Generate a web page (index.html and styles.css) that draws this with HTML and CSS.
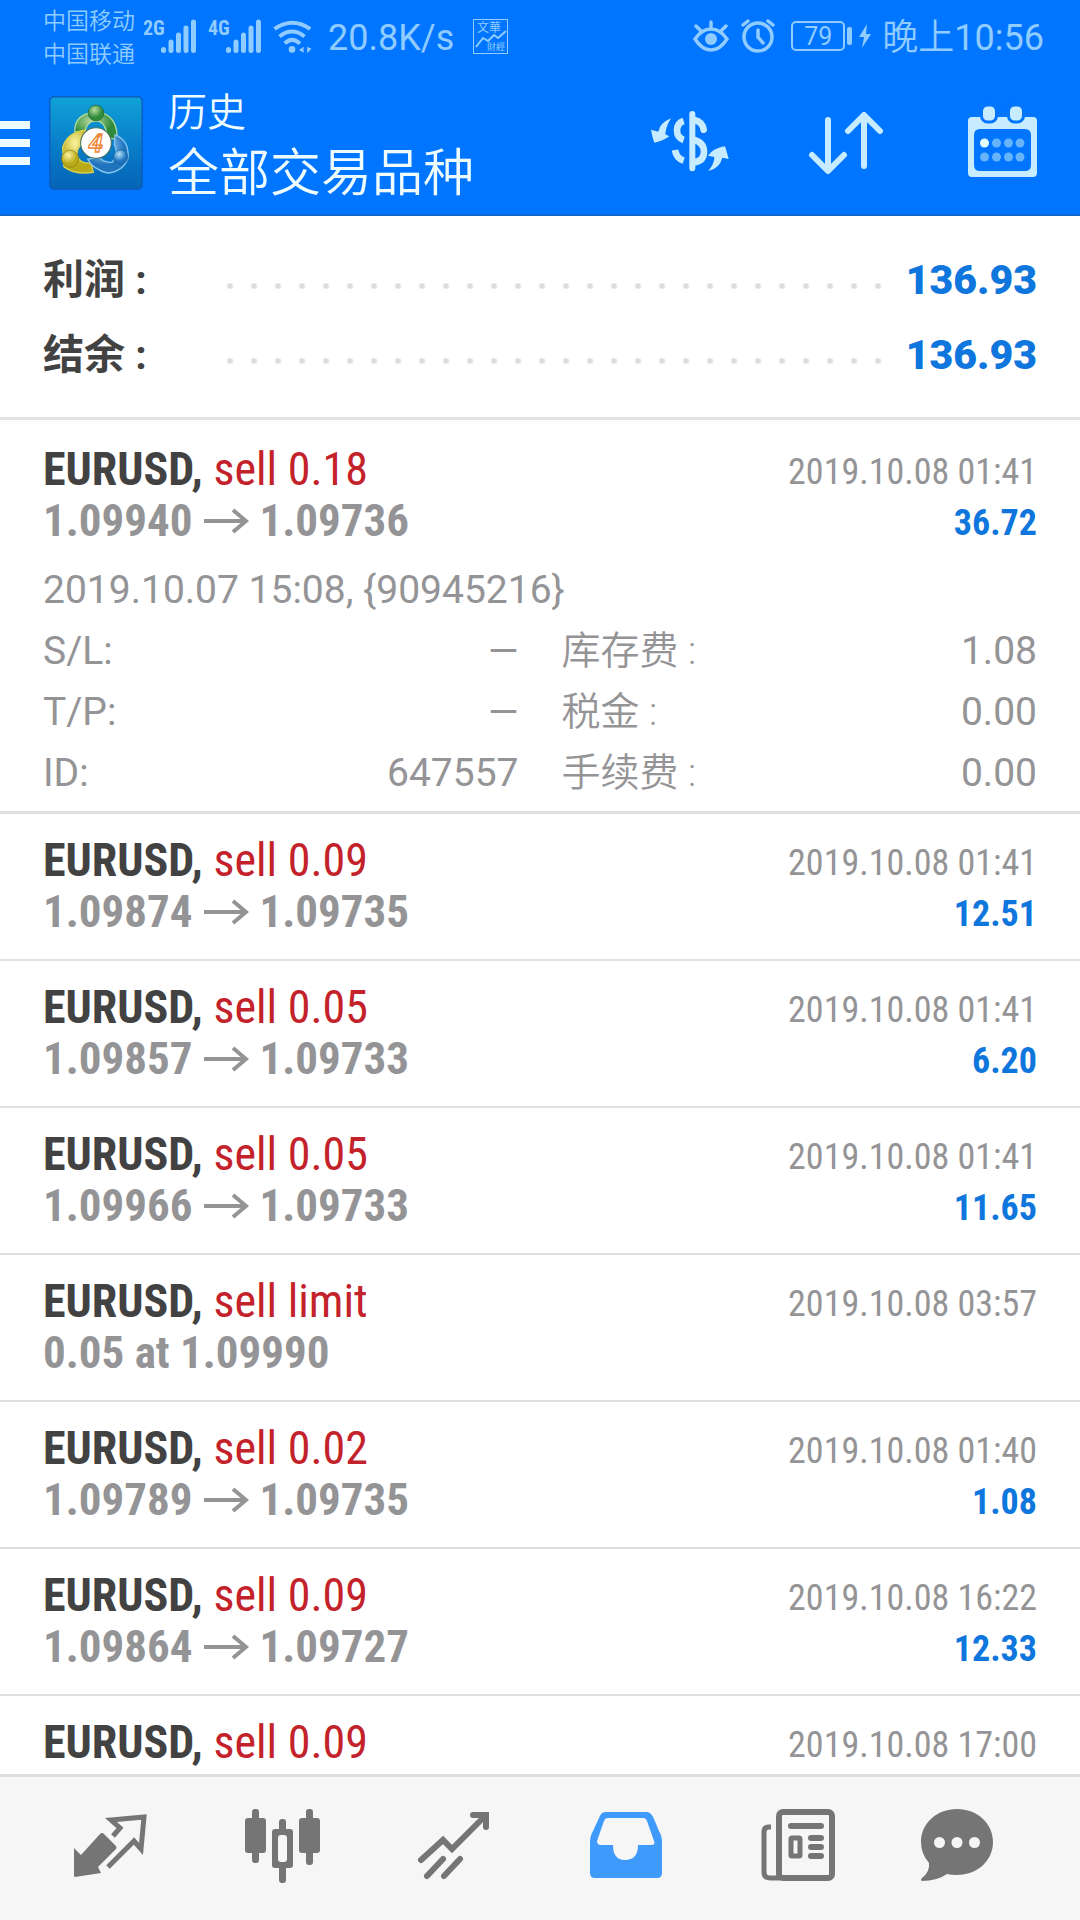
FILE: index.html
```html
<!DOCTYPE html>
<html lang="zh-CN">
<head>
<meta charset="utf-8">
<meta name="viewport" content="width=device-width, initial-scale=1">
<title>历史</title>
<link rel="stylesheet" href="styles.css">
</head>
<body>
<svg class="defs" aria-hidden="true">
  <symbol id="arrow" viewBox="0 0 45 26"><path d="M0 13H42M29 2L42 13L29 24" fill="none" stroke="currentColor" stroke-width="4"/></symbol>
  <symbol id="signal" viewBox="0 0 35 34"><path d="M2.500 30.500V31.500M10 23V31.500M17.500 16V31.500M25 9V31.500M32.500 3V31.500" fill="none" stroke="currentColor" stroke-width="5" stroke-linecap="round"/></symbol>
</svg>

<header class="top">
  <div class="status">
    <div class="carriers"><span>中国移动</span><span>中国联通</span></div>
    <div class="cell"><span class="gen">2G</span><svg class="signal"><use href="#signal"/></svg></div>
    <div class="cell"><span class="gen">4G</span><svg class="signal"><use href="#signal"/></svg></div>
    <svg class="wifi" viewBox="396 22 120 106" fill="none" stroke="currentColor" stroke-width="12">
      <path d="M400 52Q453 15 508 52M415 75Q453 45 491 75M431 96Q453 74 477 96"/>
      <circle cx="453" cy="114" r="10" fill="currentColor" stroke="none"/>
      <path d="M474 116L488 106V124ZM499 106V126L512 112Z" fill="currentColor" stroke="none"/>
    </svg>
    <span class="speed">20.8K/s</span>
    <svg class="app-note" viewBox="0 0 35 35">
      <rect x=".5" y=".5" width="34" height="34" fill="none" stroke="currentColor"/>
      <text x="4" y="13" class="note-big">文華</text>
      <text x="14" y="31" class="note-small">財經</text>
      <path d="M3 28L10 19L15 22L21 16L25 19L33 12" fill="none" stroke="currentColor" stroke-width="2"/>
    </svg>
    <svg class="eye" viewBox="0 0 36 32" fill="none" stroke="currentColor" stroke-width="3.500" stroke-linecap="round">
      <path d="M2 19Q9 9 18 9T34 19Q27 30 18 30T2 19ZM18 2V8M3 6L8 11M33 6L28 11"/>
      <circle cx="18" cy="19" r="6" fill="currentColor" stroke="none"/>
    </svg>
    <svg class="alarm" viewBox="0 0 34 34" fill="none" stroke="currentColor" stroke-width="3.500" stroke-linecap="round">
      <circle cx="17" cy="18" r="14"/><path d="M17 11V18L22 24M2 6L7 2M32 6L27 2"/>
    </svg>
    <div class="battery"><span class="level">79</span><span class="nub"></span></div>
    <svg class="bolt" viewBox="0 0 12 24"><path d="M8 0L0 13H5L3 24L12 10H7Z" fill="currentColor"/></svg>
    <span class="clock"><span class="han">晚上</span>10:56</span>
  </div>

  <div class="appbar">
    <button class="menu" aria-label="菜单"><i></i><i></i><i></i></button>
    <svg class="logo" viewBox="30 32 276 276" aria-label="MetaTrader 4">
      <defs>
        <linearGradient id="lb" x1="0" y1="0" x2="0" y2="1"><stop offset="0" stop-color="#11a2d8"/><stop offset=".5" stop-color="#087fca"/><stop offset="1" stop-color="#0563b4"/></linearGradient>
        <radialGradient id="lg" cx=".4" cy=".3"><stop offset="0" stop-color="#b9dca0"/><stop offset="1" stop-color="#2f8a3a"/></radialGradient>
        <radialGradient id="ly" cx=".4" cy=".3"><stop offset="0" stop-color="#fbf3a0"/><stop offset="1" stop-color="#b9aa18"/></radialGradient>
        <radialGradient id="ll" cx=".4" cy=".3"><stop offset="0" stop-color="#b5e2f8"/><stop offset="1" stop-color="#1f74bd"/></radialGradient>
      </defs>
      <rect x="32" y="34" width="272" height="272" rx="14" fill="url(#lb)" stroke="#0b5fc0" stroke-width="5"/>
      <path d="M106 138Q104 92 150 82H188Q232 98 230 160L200 154Q200 116 176 106H160Q140 112 136 136Z" fill="url(#lg)" stroke="#a9d89a" stroke-width="4"/>
      <path d="M136 132Q84 138 70 182L74 240Q106 264 160 256L154 230Q116 230 112 204Q112 180 134 170Z" fill="url(#ly)" stroke="#d8d24c" stroke-width="4"/>
      <path d="M224 146Q266 162 262 214Q248 254 202 258Q160 248 144 218L176 212Q196 230 216 226Q236 202 222 174Z" fill="url(#ll)" stroke="#86c5ee" stroke-width="4"/>
      <circle cx="168" cy="82" r="23" fill="url(#lg)" stroke="#17632f" stroke-width="2"/>
      <circle cx="92" cy="216" r="25" fill="url(#ly)" stroke="#857b15" stroke-width="2"/>
      <circle cx="240" cy="211" r="21" fill="url(#ll)" stroke="#155a99" stroke-width="2"/>
      <circle cx="168" cy="170" r="45" fill="#fff" stroke="#47705a" stroke-width="3"/>
      <text x="167" y="197" class="four">4</text>
    </svg>
    <div class="heading"><p class="kicker">历史</p><h1>全部交易品种</h1></div>
    <div class="actions">
      <button aria-label="货币"><svg viewBox="31 12 240 240" fill="none" stroke="currentColor" stroke-width="20">
        <path d="M158 45V208" stroke-width="18" stroke-linecap="round"/>
        <path d="M132 66Q112 72 112 94T132 123M106 153Q110 178 132 185"/>
        <path d="M164 63Q188 68 192 92" stroke-linecap="round"/><path d="M162 122Q193 130 193 158T162 190"/>
        <path d="M94 58Q60 72 56 98L34 92Q38 115 44 131Q66 128 89 112L77 106Q78 84 94 58ZM206 216Q225 192 224 174L205 170Q220 148 256 142Q262 160 267 180L248 176Q240 208 206 216Z" fill="currentColor" stroke="none"/>
      </svg></button>
      <button aria-label="排序"><svg viewBox="0 0 80 80" fill="none" stroke="currentColor" stroke-width="6" stroke-linecap="round" stroke-linejoin="round"><path d="M22 17V67M6 52L22 68L38 52M58 63V13M42 28L58 12L74 28"/></svg></button>
      <button aria-label="日期"><svg viewBox="0 0 80 80">
        <path fill-rule="evenodd" fill="currentColor" d="M10 14H71Q75 14 75 18V70Q75 74 71 74H10Q6 74 6 70V18Q6 14 10 14ZM18 26Q12 26 12 32V62Q12 68 18 68H63Q69 68 69 62V32Q69 26 63 26Z"/>
        <g fill="currentColor" stroke="#0075ff" stroke-width="3"><rect x="19.500" y="2" width="15" height="17" rx="6"/><rect x="46.500" y="2" width="15" height="17" rx="6"/></g>
        <circle cx="22.500" cy="40" r="4.500" fill="#e4fffb"/>
        <g fill="#66b5fb"><circle cx="34.500" cy="40" r="4.500"/><circle cx="46.500" cy="40" r="4.500"/><circle cx="58" cy="40" r="4.500"/><circle cx="22.500" cy="54" r="4.500"/><circle cx="34.500" cy="54" r="4.500"/><circle cx="46.500" cy="54" r="4.500"/><circle cx="58" cy="54" r="4.500"/></g>
      </svg></button>
    </div>
  </div>
</header>

<main class="content">
  <section class="summary">
    <div class="total"><span class="name">利润 :</span><span class="dots"></span><b>136.93</b></div>
    <div class="total"><span class="name">结余 :</span><span class="dots"></span><b>136.93</b></div>
  </section>

  <article class="deal open">
    <div class="line">
      <div><h2>EURUSD, <em>sell 0.18</em></h2><p class="price">1.09940<svg class="arrow"><use href="#arrow"/></svg>1.09736</p></div>
      <div class="side"><time>2019.10.08 01:41</time><b>36.72</b></div>
    </div>
    <p class="comment">2019.10.07 15:08, {90945216}</p>
    <div class="details">
      <div class="pair"><span>S/L:</span><span>—</span></div><div class="pair"><span class="han">库存费 :</span><span>1.08</span></div>
      <div class="pair"><span>T/P:</span><span>—</span></div><div class="pair"><span class="han">税金 :</span><span>0.00</span></div>
      <div class="pair"><span>ID:</span><span>647557</span></div><div class="pair"><span class="han">手续费 :</span><span>0.00</span></div>
    </div>
  </article>
  <article class="deal"><div class="line">
    <div><h2>EURUSD, <em>sell 0.09</em></h2><p class="price">1.09874<svg class="arrow"><use href="#arrow"/></svg>1.09735</p></div>
    <div class="side"><time>2019.10.08 01:41</time><b>12.51</b></div>
  </div></article>
  <article class="deal"><div class="line">
    <div><h2>EURUSD, <em>sell 0.05</em></h2><p class="price">1.09857<svg class="arrow"><use href="#arrow"/></svg>1.09733</p></div>
    <div class="side"><time>2019.10.08 01:41</time><b>6.20</b></div>
  </div></article>
  <article class="deal"><div class="line">
    <div><h2>EURUSD, <em>sell 0.05</em></h2><p class="price">1.09966<svg class="arrow"><use href="#arrow"/></svg>1.09733</p></div>
    <div class="side"><time>2019.10.08 01:41</time><b>11.65</b></div>
  </div></article>
  <article class="deal"><div class="line">
    <div><h2>EURUSD, <em>sell limit</em></h2><p class="price">0.05 at 1.09990</p></div>
    <div class="side"><time>2019.10.08 03:57</time></div>
  </div></article>
  <article class="deal"><div class="line">
    <div><h2>EURUSD, <em>sell 0.02</em></h2><p class="price">1.09789<svg class="arrow"><use href="#arrow"/></svg>1.09735</p></div>
    <div class="side"><time>2019.10.08 01:40</time><b>1.08</b></div>
  </div></article>
  <article class="deal"><div class="line">
    <div><h2>EURUSD, <em>sell 0.09</em></h2><p class="price">1.09864<svg class="arrow"><use href="#arrow"/></svg>1.09727</p></div>
    <div class="side"><time>2019.10.08 16:22</time><b>12.33</b></div>
  </div></article>
  <article class="deal"><div class="line">
    <div><h2>EURUSD, <em>sell 0.09</em></h2></div>
    <div class="side"><time>2019.10.08 17:00</time></div>
  </div></article>
</main>

<nav class="tabs">
  <a href="#quotes" aria-label="行情"><svg viewBox="0 0 76 76"><path d="M2 41L9 48L28 27Q30 25 32 27L44 39Q45 41 44 42L26 60L29 66L3 70Q2 70 2 68Z" fill="currentColor"/><path d="M41 29L48 21L39 13L72 10L69 42L62 34L36 60" fill="none" stroke="currentColor" stroke-width="5"/></svg></a>
  <a href="#charts" aria-label="图表"><svg viewBox="0 0 76 76"><g fill="currentColor"><rect x="1" y="11" width="21" height="35" rx="3"/><rect x="8" y="2" width="7" height="54" rx="3"/><rect x="28" y="22" width="21" height="39" rx="3"/><rect x="35" y="12" width="7" height="64" rx="3"/><rect x="55" y="11" width="21" height="35" rx="3"/><rect x="62" y="2" width="7" height="56" rx="3"/></g><rect x="34" y="28" width="9" height="27" rx="3" fill="#f6f6f6"/></svg></a>
  <a href="#trade" aria-label="交易"><svg viewBox="0 0 76 76" fill="none" stroke="currentColor" stroke-width="6" stroke-linecap="round"><path d="M5 53L27 33L36 42L69 9M57 8H70V20M11 69L27 52M28 69L44 52"/></svg></a>
  <a href="#history" aria-label="历史" class="active"><svg viewBox="0 0 76 76"><path fill-rule="evenodd" fill="currentColor" d="M17 5H59Q63 5 66 12L71 24Q74 29 74 36V66Q74 71 69 71H7Q2 71 2 66V36Q2 29 5 24L11 11Q13 5 17 5ZM20 11Q17 11 16 14L9 34Q9 38 13 38H25Q25 53 37 53Q50 53 50 38H63Q68 38 66 34L59 14Q58 11 55 11Z"/></svg></a>
  <a href="#news" aria-label="新闻"><svg viewBox="0 0 76 76" fill="none" stroke="currentColor" stroke-width="6"><rect x="19" y="5" width="53" height="66" rx="4"/><path d="M11 20H9Q4 20 4 25V65Q4 71 10 71H20" stroke-width="5"/><path d="M31 19H61M51 31H61M51 40H61M51 49H61" stroke-linecap="round"/><rect x="31" y="31" width="9" height="18" rx="1" stroke-width="5"/></svg></a>
  <a href="#mail" aria-label="邮箱"><svg viewBox="0 0 76 76"><path fill="currentColor" d="M38 2C58 2 74 16 74 35S58 68 38 68Q32 68 28 67Q18 74 3 74Q1 73 3 71Q11 65 10 56Q2 47 2 35C2 16 18 2 38 2Z"/><g fill="#f6f6f6"><circle cx="20.500" cy="35.500" r="5.500"/><circle cx="38" cy="35.500" r="5.500"/><circle cx="55.500" cy="35.500" r="5.500"/></g></svg></a>
</nav>
</body>
</html>
```
FILE: styles.css
```css
* { box-sizing: border-box; margin: 0; padding: 0; }

body {
  display: flex;
  flex-direction: column;
  height: 100vh;
  overflow: hidden;
  background: #fff;
  color: #424242;
  font-family: Roboto, "Noto Sans CJK SC", sans-serif;
}

svg { display: block; flex: none; }
button { border: 0; background: none; color: inherit; }
a { color: inherit; }
.defs { position: absolute; width: 0; height: 0; }
.han { font-weight: 350; }

/* Status bar and app bar */
.top {
  flex: none;
  background: #0075ff;
  color: #c8ecff;
  border-bottom: 2px solid #1068cc;
}

.status {
  display: flex;
  align-items: center;
  height: 72px;
  padding: 0 36px 0 43px;
  color: #90ccff;
}

.carriers { display: flex; flex-direction: column; margin-right: 8px; padding-top: 4px; font-size: 23px; font-weight: 350; line-height: 33px; }
.cell { display: flex; align-items: flex-start; margin-right: 12px; }
.gen { width: 18px; font-family: "Roboto Condensed", sans-serif; font-size: 20px; font-weight: 700; line-height: 18px; }
.signal { width: 35px; height: 34px; }
.wifi { width: 40px; height: 35px; margin-right: 15px; }
.speed { padding-top: 4px; font-size: 36px; }
.app-note { width: 35px; height: 35px; margin: 0 auto 0 19px; }
.app-note text { fill: currentColor; }
.note-big { font-size: 12px; }
.note-small { font-size: 9px; }
.eye { width: 36px; height: 32px; margin-right: 12px; }
.alarm { width: 34px; height: 34px; margin-right: 16px; }
.battery { display: flex; align-items: center; gap: 2px; margin-right: 7px; }
.level { width: 54px; height: 30px; border: 2px solid; border-radius: 5px; font-size: 25px; line-height: 27px; text-align: center; }
.nub { width: 5px; height: 18px; border-radius: 2px; background: currentColor; }
.bolt { width: 12px; height: 24px; margin-right: 11px; }
.clock { padding-top: 4px; font-size: 36px; line-height: 48px; }

.appbar { display: flex; align-items: center; height: 142px; padding-right: 38px; }
.menu { display: flex; flex-direction: column; gap: 10px; width: 30px; margin-right: 19px; }
.menu i { height: 8px; background: #effcff; }
.logo { width: 94px; height: 94px; margin-right: 25px; }
.four { fill: #fff; stroke: #ee8634; stroke-width: 4px; font-size: 76px; font-style: italic; font-weight: 700; text-anchor: middle; }
.heading { flex: 1; padding-top: 6px; color: #effcff; font-weight: 350; }
.kicker { font-size: 39px; line-height: 56px; }
h1 { font-size: 51px; font-weight: 350; line-height: 66px; }
.actions { display: flex; gap: 76px; }
.actions svg { width: 80px; height: 80px; }

/* Totals */
.content { flex: 1; min-height: 0; overflow-y: auto; scrollbar-width: none; }
.summary { padding: 27px 43px 24px; border-bottom: 3px solid #e2e2e2; }
.total { display: flex; align-items: center; font-size: 41px; font-weight: 700; line-height: 75px; }
.name { width: 181px; }
.dots {
  flex: 1;
  height: 6px;
  margin: 10px 22px 0 0;
  background: radial-gradient(circle at 6px 3px, #dedede 2px, transparent 4px) 0 0 / 24px 6px repeat-x;
}
.total b, .side b { color: #0e76dc; }

/* Deals */
.deal { padding: 21px 43px 22px; border-bottom: 2px solid #dfdfdf; color: #949496; }
.deal.open { padding-top: 24px; padding-bottom: 7px; border-bottom-width: 3px; }
.line { display: flex; justify-content: space-between; line-height: 51px; font-family: "Roboto Condensed", sans-serif; }
h2 { color: #424242; font-size: 46px; }
h2 em { color: #c4222b; font-style: normal; font-weight: 400; }
.price { display: flex; align-items: center; font-size: 45px; font-weight: 700; }
.arrow { width: 45px; height: 26px; margin: 0 11px; }
.side { display: flex; flex-direction: column; align-items: flex-end; max-height: 102px; padding-top: 3px; font-size: 36px; }
.comment { margin-top: 14px; font-size: 39px; line-height: 61px; }
.details { display: grid; grid-template-columns: 1fr 1fr; column-gap: 43px; font-size: 39px; line-height: 61px; }
.pair { display: flex; justify-content: space-between; height: 61px; }

/* Bottom tabs */
.tabs {
  display: grid;
  grid-template-columns: repeat(5, 172fr) 146fr;
  flex: none;
  justify-items: center;
  padding: 30px 50px 37px 24px;
  border-top: 3px solid #dedede;
  background: #f6f6f6;
  color: #757575;
}
.tabs svg { width: 76px; height: 76px; }
.tabs .active { color: #3f9bfb; }
```
